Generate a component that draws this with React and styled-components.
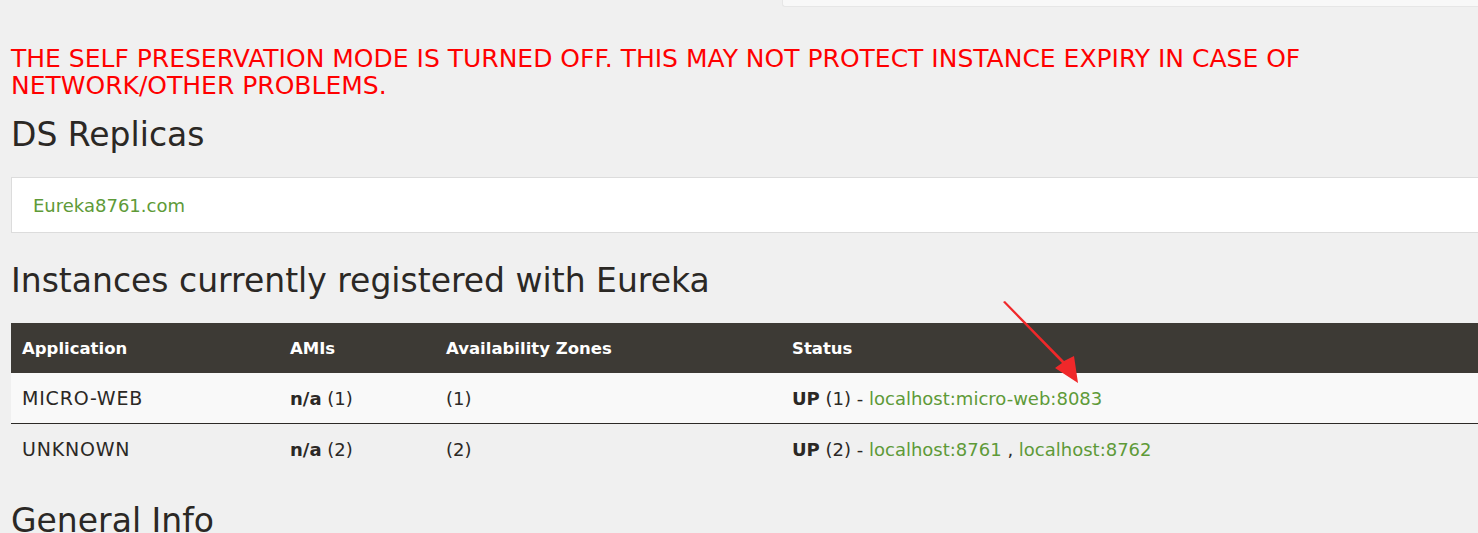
import React from 'react';
import styled, { createGlobalStyle } from 'styled-components';

const GlobalStyle = createGlobalStyle`
  html, body {
    margin: 0;
    padding: 0;
    background: #f0f0f0;
    overflow: hidden;
  }
  body {
    font-family: "DejaVu Sans", "Liberation Sans", sans-serif;
    color: #2d2a27;
  }
`;

const Page = styled.div`
  position: relative;
  width: 1478px;
  height: 533px;
  overflow: hidden;
`;

const TopPanel = styled.div`
  margin-left: 782px;
  height: 6px;
  background: #f8f8f8;
  border-bottom: 1px solid #e6e6e6;
  border-left: 1px solid #e6e6e6;
  border-bottom-left-radius: 3px;
`;

const Content = styled.div`
  padding-left: 11px;
`;

const Warning = styled.h4`
  margin: 38px 0 0;
  color: #ff0000;
  font-size: 25px;
  font-weight: 500;
  line-height: 27px;
`;

const Heading = styled.h2`
  margin: ${p => p.$top}px 0 0;
  font-size: 33px;
  font-weight: 400;
  line-height: 36px;
  color: #2b2825;
`;

const ReplicaBox = styled.div`
  margin-top: ${p => p.$top}px;
  width: 1500px;
  height: 56px;
  display: flex;
  align-items: center;
  padding-left: 21px;
  background: #ffffff;
  border: 1px solid #dcdcdc;
  box-sizing: border-box;
`;

const Link = styled.a`
  color: #5e9a38;
  text-decoration: none;
  font-size: ${p => p.$size || 18}px;
`;

const Table = styled.table`
  margin-top: ${p => p.$top}px;
  width: 1500px;
  border-collapse: collapse;
  table-layout: fixed;
  font-size: 18px;
`;

const HeadCell = styled.th`
  height: 50px;
  padding: 0 0 0 11px;
  background: #3d3a35;
  color: #ffffff;
  text-align: left;
  font-size: 16.5px;
  font-weight: 700;
`;

const Row = styled.tr`
  background: ${p => (p.$striped ? '#f9f9f9' : 'transparent')};
  border-bottom: ${p => (p.$divider ? '1px solid #2d2a27' : 'none')};
`;

const Cell = styled.td`
  height: 50px;
  padding: 0 0 0 11px;
  color: #2b2825;
  font-size: ${p => (p.$caps ? 19 : 18)}px;
  letter-spacing: ${p => (p.$caps ? 0.8 : 0)}px;
`;

const Strong = styled.b`
  font-weight: 700;
`;

const Arrow = styled.svg`
  position: absolute;
  left: 998px;
  top: 298px;
  pointer-events: none;
`;

const apps = [
  { name: 'MICRO-WEB', count: 1, links: ['localhost:micro-web:8083'] },
  { name: 'UNKNOWN', count: 2, links: ['localhost:8761', 'localhost:8762'] },
];

export default function App() {
  return (
    <Page>
      <GlobalStyle />
      <TopPanel />
      <Content>
        <Warning>
          THE SELF PRESERVATION MODE IS TURNED OFF. THIS MAY NOT PROTECT INSTANCE EXPIRY IN CASE OF
          <br />
          NETWORK/OTHER PROBLEMS.
        </Warning>
        <Heading $top={18}>DS Replicas</Heading>
        <ReplicaBox $top={24}>
          <Link href="#">Eureka8761.com</Link>
        </ReplicaBox>
        <Heading $top={30}>Instances currently registered with Eureka</Heading>
        <Table $top={24}>
          <colgroup>
            <col style={{ width: 268 }} />
            <col style={{ width: 156 }} />
            <col style={{ width: 346 }} />
            <col />
          </colgroup>
          <thead>
            <tr>
              <HeadCell>Application</HeadCell>
              <HeadCell>AMIs</HeadCell>
              <HeadCell>Availability Zones</HeadCell>
              <HeadCell>Status</HeadCell>
            </tr>
          </thead>
          <tbody>
            {apps.map((app, i) => (
              <Row key={app.name} $striped={i % 2 === 0} $divider={i === 0}>
                <Cell $caps>{app.name}</Cell>
                <Cell>
                  <Strong>n/a</Strong> ({app.count})
                </Cell>
                <Cell>({app.count})</Cell>
                <Cell>
                  <Strong>UP</Strong> ({app.count}) -{' '}
                  {app.links.map((l, j) => (
                    <React.Fragment key={l}>
                      {j > 0 && ' , '}
                      <Link href="#">{l}</Link>
                    </React.Fragment>
                  ))}
                </Cell>
              </Row>
            ))}
          </tbody>
        </Table>
        <Heading $top={29}>General Info</Heading>
      </Content>
      <Arrow width="90" height="90" viewBox="0 0 90 90">
        <polygon points="5,4 7,3 66,63 76,58 80,85 57,70 64,65" fill="#f0282a" />
      </Arrow>
    </Page>
  );
}
